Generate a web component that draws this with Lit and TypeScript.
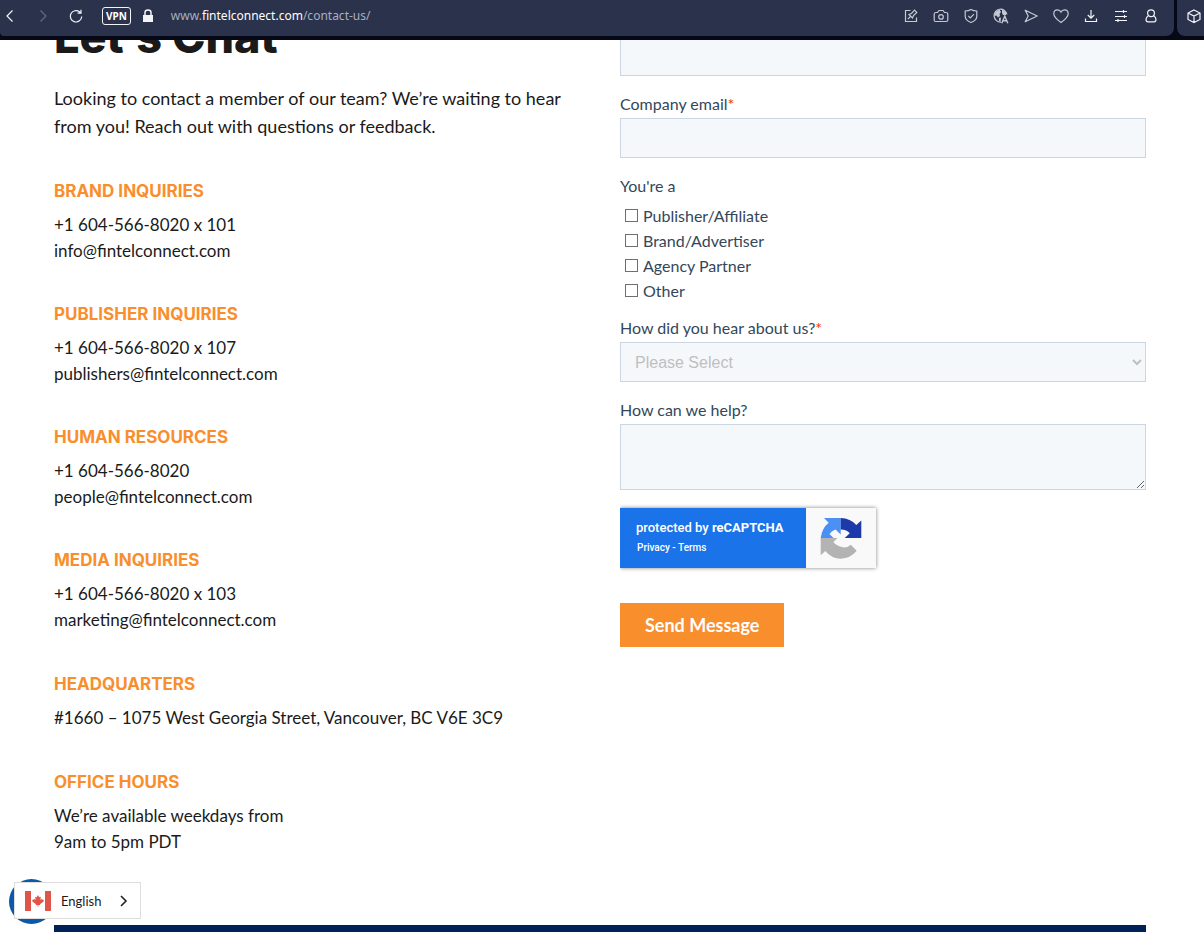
import { LitElement, html, css, svg } from "lit";
import { customElement } from "lit/decorators.js";

interface Inquiry {
  title: string;
  phone: string;
  email: string;
}

const INQUIRIES: Inquiry[] = [
  { title: "BRAND INQUIRIES", phone: "+1 604-566-8020 x 101", email: "info@fintelconnect.com" },
  { title: "PUBLISHER INQUIRIES", phone: "+1 604-566-8020 x 107", email: "publishers@fintelconnect.com" },
  { title: "HUMAN RESOURCES", phone: "+1 604-566-8020", email: "people@fintelconnect.com" },
  { title: "MEDIA INQUIRIES", phone: "+1 604-566-8020 x 103", email: "marketing@fintelconnect.com" },
];

const ROLES = ["Publisher/Affiliate", "Brand/Advertiser", "Agency Partner", "Other"];

const TOOLS = [
  { name: "Easy setup", icon: svg`<path d="M7.500 2.500H2.500V13.500H13.500V9.500M4.800 11.200L7.500 8.500M6 6.500L9.500 10L10.500 7.500L13.800 4.500L11.500 2.200L8.500 5.500Z"/>` },
  { name: "Snapshot", icon: svg`<path d="M4.500 4.500L6 2.500H10L11.500 4.500H13Q14.800 4.500 14.800 6V12Q14.800 13.500 13.300 13.500H2.700Q1.200 13.500 1.200 12V6Q1.200 4.500 3 4.500Z"/><circle cx="8" cy="8.900" r="2.300"/>` },
  { name: "Ad blocker", icon: svg`<path d="M8 1.500Q10.500 3 13.800 3V8.500Q13.500 12.500 8 14.500Q2.500 12.500 2.200 8.500V3Q5.500 3 8 1.500ZM5.300 7.800L7.300 9.800L10.900 6.200"/>` },
  { name: "Translate", icon: svg`<path d="M8 14.200A6.500 6.500 0 1 1 14 6.500"/><path class="solid" d="M2.500 4L6.500 1.500L8 4L6.500 6L7 8L5 9.500L3.500 7.500L1.500 8ZM9 1.500L13 4L13 7L10 7L9 5ZM6 10L8 9.500L7.500 13.500L6 13Z"/><path stroke-width="1.400" d="M8.800 15.200L11.800 8L14.800 15.200M10 12.800H13.600"/>` },
  { name: "My Flow", icon: svg`<path stroke-linejoin="round" d="M2.200 2.200L14.200 8L2.200 13.800L5.200 8Z"/>` },
  { name: "Bookmark", icon: svg`<path d="M8 14.500Q.800 9.500 .800 5.800Q.800 1.800 4.500 1.800Q7 1.800 8 4Q9 1.800 11.500 1.800Q15.200 1.800 15.200 5.800Q15.200 9.500 8 14.500Z"/>` },
  { name: "Downloads", bright: true, icon: svg`<path d="M8 2V10M4.800 7L8 10.200L11.200 7M2.500 10.500V13.500H13.500V10.500"/>` },
  { name: "Easy settings", bright: true, icon: svg`<path d="M2 3.500H14M2 8.500H14M2 12.500H14M10.500 2V5M11.500 7V10M5 11V14"/>` },
  { name: "Profile", bright: true, icon: svg`<circle cx="8" cy="5.200" r="3.400"/><path d="M5.300 7.700Q3 9.200 3 11.500Q3 13.800 5 13.800H11Q13 13.800 13 11.500Q13 9.200 10.700 7.700"/>` },
];

@customElement("browser-bar")
class BrowserBar extends LitElement {
  static styles = css`
    :host { display: flex; gap: 3px; background: #050816; padding-bottom: 4px; font-family: "Noto Sans", sans-serif; }
    .main, .side { background: #2b324c; height: 36px; display: flex; align-items: center; box-sizing: border-box; }
    .main { flex: 1; border-radius: 0 0 8px 4px; padding: 0 15px 4px 2px; }
    .side { border-radius: 0 0 0 8px; padding: 0 2px 4px 9px; }
    button { border: 0; background: none; padding: 0; display: flex; color: #c6c9d4; }
    svg { width: 16px; height: 16px; fill: none; stroke: currentColor; stroke-width: 1.2; }
    .bright { color: #f3f4f8; }
    .dim { color: #646a80; }
    .nav { display: flex; gap: 17px; align-items: center; }
    .vpn { border: 1px solid #f3f4f8; border-radius: 3px; color: #fff; font: bold 10px/16px "Noto Sans", sans-serif; padding: 0 3px; margin-left: 1px; }
    .lock { margin-left: -8px; }
    .address { flex: 1; margin-left: 15px; font-size: 12px; line-height: 20px; color: #a5afc2; }
    .domain { color: #fff; }
    .tools { display: flex; gap: 14px; }
    .solid { fill: currentColor; stroke: none; }
  `;

  render() {
    return html`
      <div class="main">
        <div class="nav">
          <button class="bright" aria-label="Back"><svg viewBox="0 0 16 16"><path d="M10.500 2.500L5 8L10.500 13.500"/></svg></button>
          <button class="dim" aria-label="Forward"><svg viewBox="0 0 16 16"><path d="M5.500 2.500L11 8L5.500 13.500"/></svg></button>
          <button class="bright" aria-label="Reload"><svg viewBox="0 0 16 16"><path d="M13.700 8.500A5.700 5.700 0 1 1 11.500 3.800L12.800 5M13 1.800V5.200H9.600"/></svg></button>
          <button class="vpn">VPN</button>
          <svg class="lock bright" viewBox="0 0 16 16"><path class="solid" d="M3 7H13V14H3Z"/><path stroke-width="1.500" d="M5 7V4.500Q5 2 8 2Q11 2 11 4.500V7"/></svg>
        </div>
        <div class="address">www.<span class="domain">fintelconnect.com</span>/contact-us/</div>
        <div class="tools">
          ${TOOLS.map((t) => html`<button class=${t.bright ? "bright" : ""} aria-label=${t.name}><svg viewBox="0 0 16 16">${t.icon}</svg></button>`)}
        </div>
      </div>
      <div class="side">
        <button class="bright" aria-label="Extensions"><svg viewBox="0 0 16 16"><path d="M8 2L14 5V11.500L8 14.500L2 11.500V5ZM2 5L8 8L14 5M8 8V14.500"/></svg></button>
      </div>
    `;
  }
}

@customElement("contact-details")
class ContactDetails extends LitElement {
  static styles = css`
    :host { display: block; color: #1a1a1a; font: 17px/26px Lato, sans-serif; }
    h1 { font: 800 45px/56px Inter, sans-serif; margin: 0 0 19px; }
    .intro { font-size: 18px; line-height: 28px; margin: 0 0 39px; }
    h2 { font: bold 17px/24px Inter, sans-serif; color: #f98e2d; margin: 0 0 9px; }
    p { margin: 0; }
    a { color: inherit; text-decoration: none; }
    .contacts { display: grid; gap: 38px; margin-bottom: 39px; }
    .office { display: grid; gap: 39px; }
  `;

  render() {
    return html`
      <h1>Let’s Chat</h1>
      <p class="intro">Looking to contact a member of our team? We’re waiting to hear from you! Reach out with questions or feedback.</p>
      <div class="contacts">
        ${INQUIRIES.map((i) => html`
          <section>
            <h2>${i.title}</h2>
            <p>${i.phone}<br /><a href="mailto:${i.email}">${i.email}</a></p>
          </section>`)}
      </div>
      <div class="office">
        <section>
          <h2>HEADQUARTERS</h2>
          <p>#1660 – 1075 West Georgia Street, Vancouver, BC V6E 3C9</p>
        </section>
        <section>
          <h2>OFFICE HOURS</h2>
          <p>We’re available weekdays from<br />9am to 5pm PDT</p>
        </section>
      </div>
    `;
  }
}

@customElement("contact-form")
class ContactForm extends LitElement {
  static styles = css`
    :host { display: block; color: #33475b; font: 16px/20px Lato, sans-serif; }
    form { display: grid; }
    .label { display: block; margin-bottom: 4px; }
    .required { color: #ff2a00; }
    .field { margin-bottom: 18px; }
    .control { display: block; box-sizing: border-box; width: 100%; height: 40px; margin: 0; border: 1px solid #cbd6e2; border-radius: 0; background: #f5f8fa; padding: 9px 10px; font: 16px/20px "Liberation Sans", Arial, sans-serif; }
    .select { color: #bfbfbf; background: #f5f8fa; }
    .area { height: 66px; resize: vertical; }
    .options { border: 0; margin: 0 0 15px; padding: 0; min-width: 0; }
    legend { padding: 0; margin-bottom: 7px; }
    .option { display: flex; align-items: center; gap: 5px; height: 25px; padding-left: 5px; }
    .option input { width: 13px; height: 13px; margin: 0; appearance: none; border: 1px solid #6f6f6f; background: #fff; }
    .option input:checked { background: #33475b; }
    .captcha { display: flex; width: 256px; height: 60px; box-shadow: 0 0 4px #808080; background: #f9f9f9; margin-bottom: 35px; clip-path: inset(-6px -6px -6px 0); }
    .notice { flex: 1; box-sizing: border-box; background: #1a73e8; color: #fff; padding: 10px 16px; font: 500 13px/20px Roboto, sans-serif; }
    .links { font-size: 10px; padding-left: 1px; }
    .links a { color: inherit; text-decoration: none; }
    .badge { width: 70px; display: grid; place-items: center; }
    .badge svg { width: 44px; height: 44px; }
    .send { justify-self: start; border: 0; background: #f98e2d; color: #fff; padding: 12px 25px; font: bold 18px/20px Lato, sans-serif; }
  `;

  render() {
    return html`
      <form @submit=${(e: Event) => e.preventDefault()}>
        <div class="field"><input class="control" aria-label="Last name" /></div>
        <div class="field">
          <label class="label" for="email">Company email<span class="required">*</span></label>
          <input class="control" id="email" type="email" />
        </div>
        <fieldset class="options">
          <legend>You're a</legend>
          ${ROLES.map((r) => html`<label class="option"><input type="checkbox" />${r}</label>`)}
        </fieldset>
        <div class="field">
          <label class="label" for="source">How did you hear about us?<span class="required">*</span></label>
          <select class="control select" id="source"><option>Please Select</option></select>
        </div>
        <div class="field">
          <label class="label" for="help">How can we help?</label>
          <textarea class="control area" id="help"></textarea>
        </div>
        <div class="captcha">
          <div class="notice">
            <div>protected by <b>reCAPTCHA</b></div>
            <div class="links"><a href="#privacy">Privacy</a> - <a href="#terms">Terms</a></div>
          </div>
          <div class="badge">
            <svg viewBox="0 0 44 44">
              <path fill="#4a90f5" d="M21.700 2H5L9.700 6.800Q3 12 1.700 22H14.500L10.500 18Q12.500 14.500 16.500 13.500L21.700 18.500Z"/>
              <path fill="#1c3aa9" d="M21.700 2Q31.500 2.300 37.300 9L42.300 4.500V22H25.700L30.800 17.300Q28 13.500 21.700 13.500Z"/>
              <path fill="#b3b3b3" d="M1.700 22V39.300L6.300 35Q12.500 42.500 21.700 42.700Q31.500 42.300 37.700 34.700L31.700 28.700Q28.500 32 24 31.300Q17.500 30 14.300 26L18.500 22Z"/>
            </svg>
          </div>
        </div>
        <button class="send">Send Message</button>
      </form>
    `;
  }
}

@customElement("language-switcher")
class LanguageSwitcher extends LitElement {
  static styles = css`
    :host { display: block; }
    .bubble { position: absolute; left: -5px; top: -3px; width: 45px; height: 45px; border: 0; border-radius: 50%; background: #0a5aa8; padding: 0; }
    .language { position: relative; display: flex; align-items: center; gap: 10px; height: 37px; border: 1px solid #ddd; background: #fff; padding: 0 10px; font: 13px/20px Lato, sans-serif; color: #1a1a1a; }
    .flag { width: 26px; height: 20px; }
    .arrow { width: 12px; height: 12px; margin-left: 7px; fill: none; stroke: #222; stroke-width: 1.6; }
  `;

  render() {
    return html`
      <button class="bubble" aria-label="Accessibility"></button>
      <button class="language">
        <svg class="flag" viewBox="0 0 26 20"><path fill="#e05549" d="M0 0H6V20H0ZM20 0H26V20H20ZM13 4L14.300 6.300L15.800 5.800L15.400 9L17 7.700L17.700 9L19 8.800L18.300 10.800L15 13.200L15.300 14.300L13.300 14V16H12.700V14L10.700 14.300L11 13.200L7.700 10.800L7 8.800L8.300 9L9 7.700L10.600 9L10.200 5.800L11.700 6.300Z"/></svg>
        <span>English</span>
        <svg class="arrow" viewBox="0 0 12 12"><path d="M3 1L8 6L3 11"/></svg>
      </button>
    `;
  }
}

@customElement("app-root")
class AppRoot extends LitElement {
  static styles = css`
    :host { display: flex; flex-direction: column; height: 100vh; overflow: hidden; background: #fff; position: relative; }
    .page { flex: 1; min-height: 0; overflow: hidden; padding: 0 58px 0 54px; }
    .columns { display: grid; grid-template-columns: 1fr 1fr; gap: 40px; align-items: start; margin-top: -31px; padding-bottom: 70px; }
    .form { margin-top: 27px; }
    .footer { background: #002259; height: 240px; }
    .switcher { position: absolute; left: 14px; bottom: 13px; }
  `;

  render() {
    return html`
      <browser-bar></browser-bar>
      <main class="page">
        <div class="columns">
          <contact-details></contact-details>
          <contact-form class="form"></contact-form>
        </div>
        <div class="footer"></div>
      </main>
      <language-switcher class="switcher"></language-switcher>
    `;
  }
}
